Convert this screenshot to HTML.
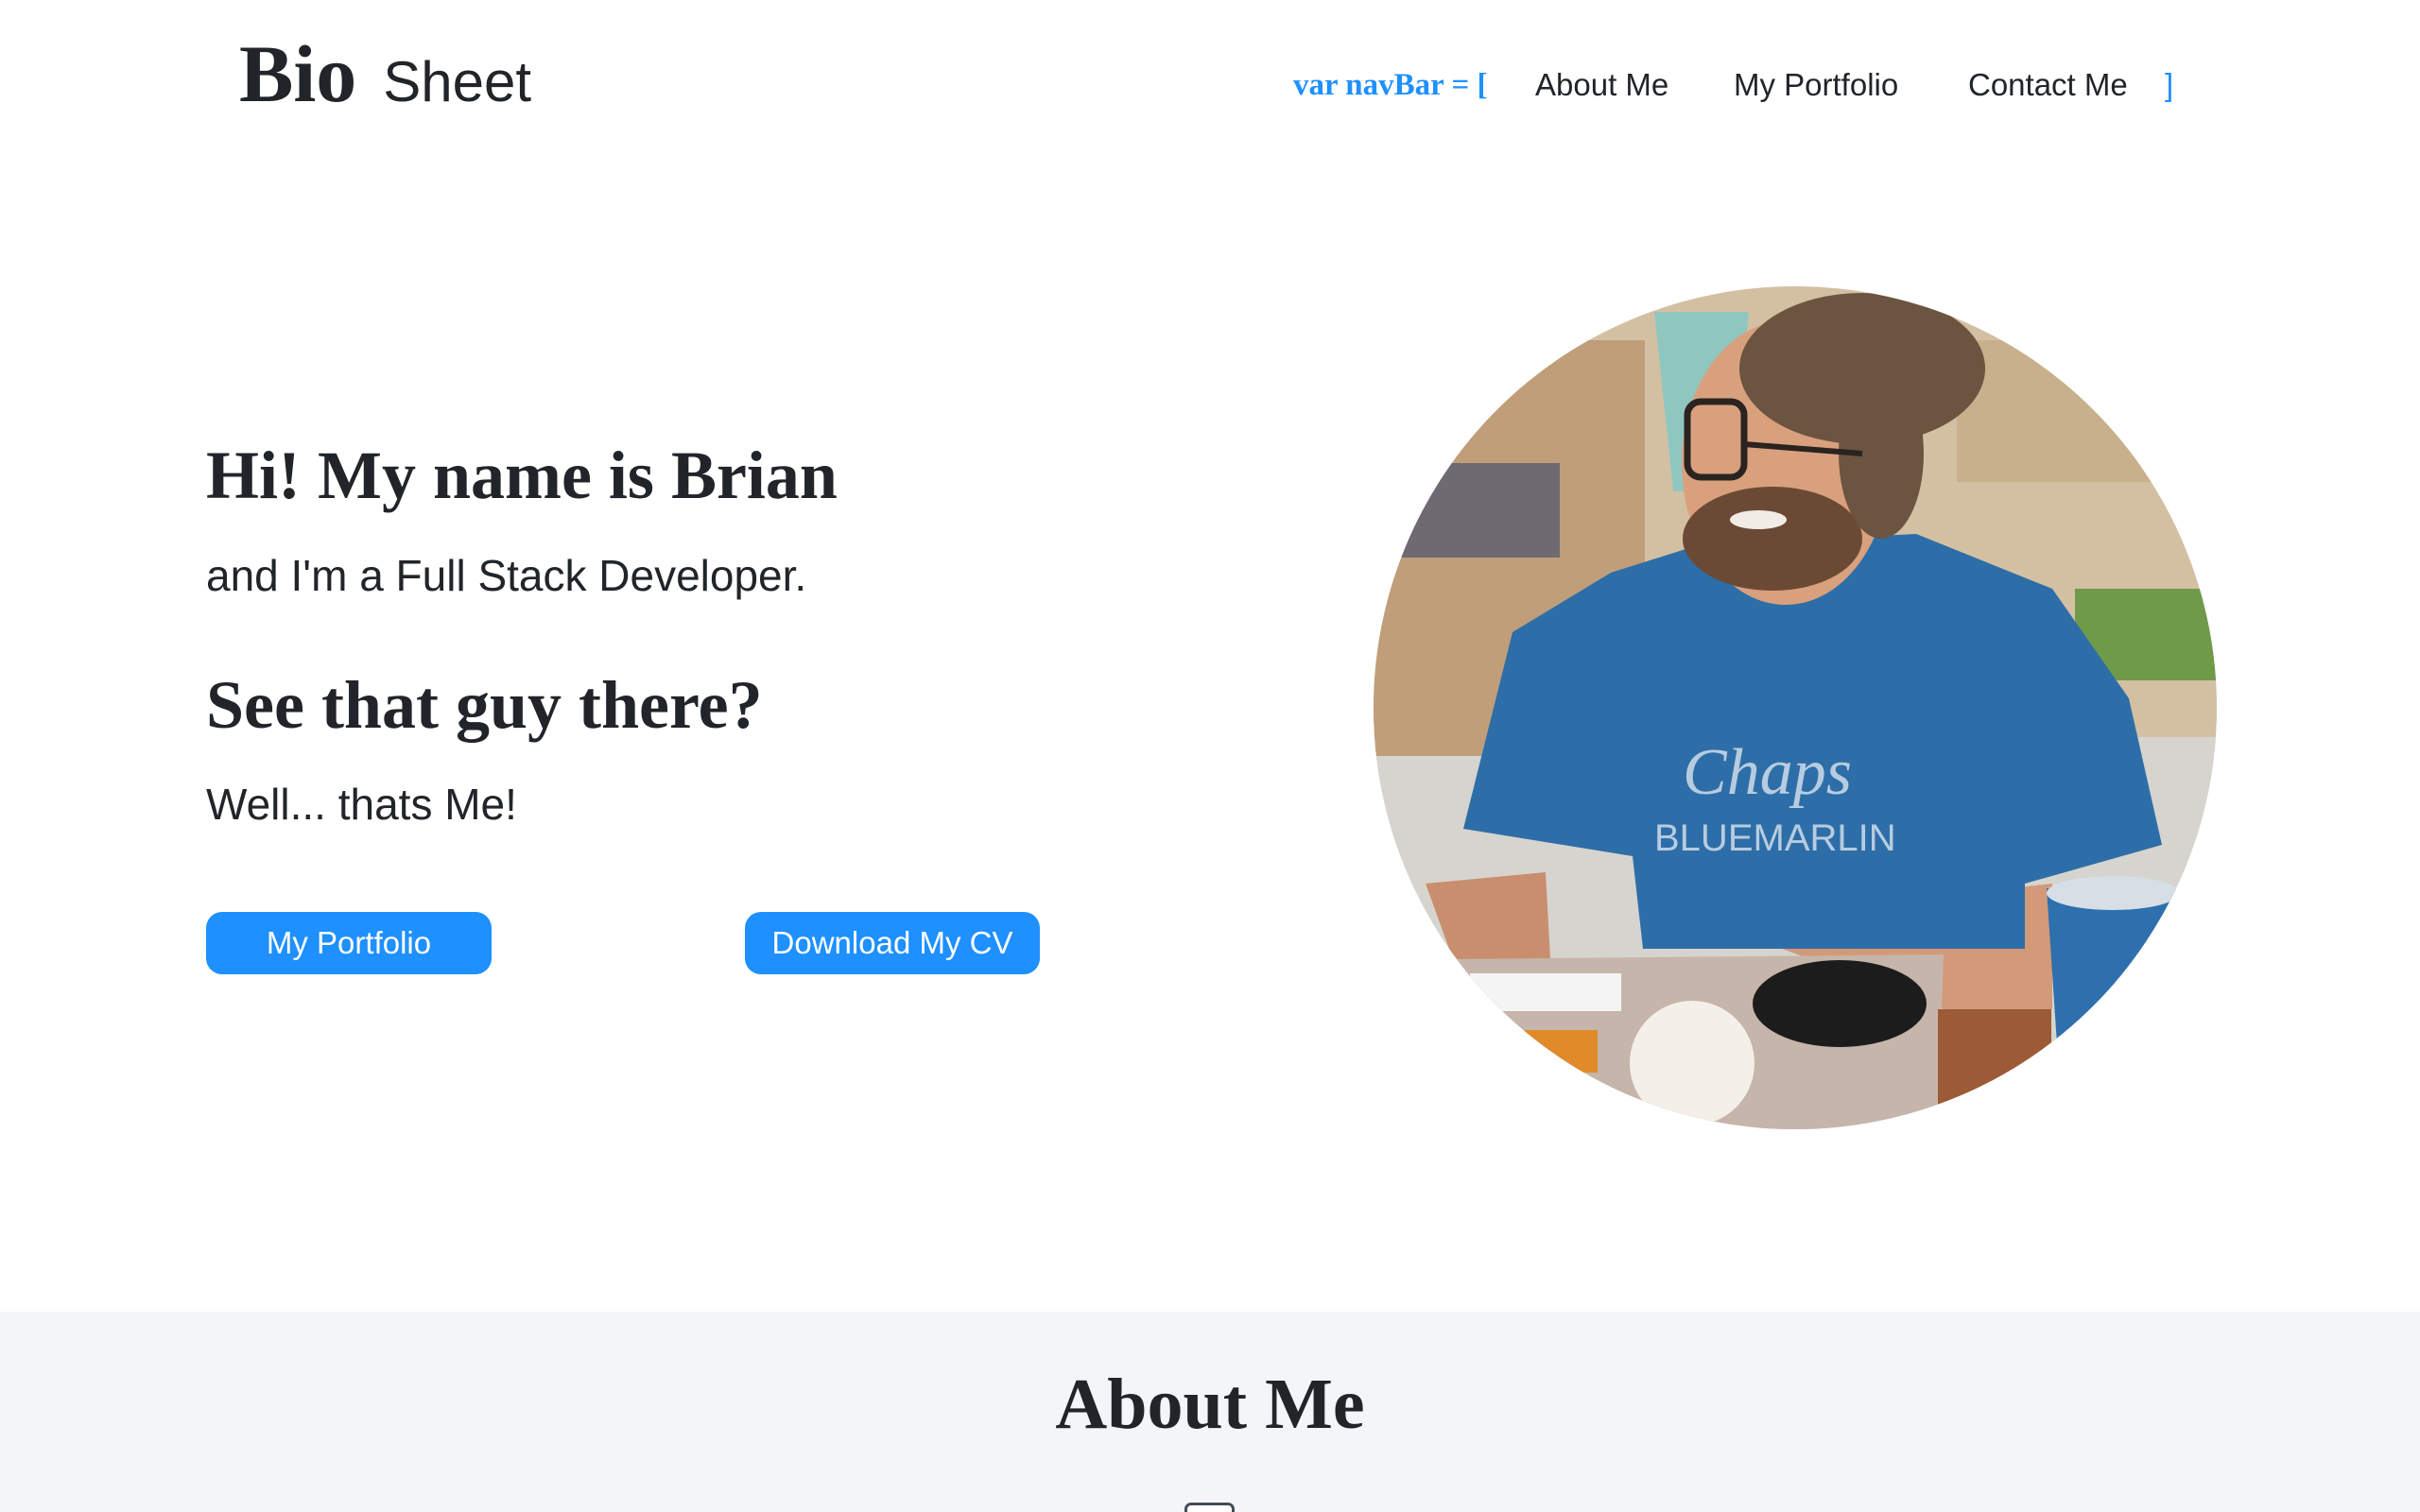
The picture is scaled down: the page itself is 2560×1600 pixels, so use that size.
<!DOCTYPE html>
<html><head><meta charset="utf-8">
<style>
html,body{margin:0;padding:0;width:2560px;height:1600px;overflow:hidden;}
body{background:#fff;position:relative;font-family:"Liberation Sans",sans-serif;color:#212529;}
.abs{position:absolute;white-space:nowrap;}
.logo{left:253px;top:28px;font-family:"Liberation Serif",serif;font-weight:bold;font-size:86px;color:#212529;}
.logo span{font-family:"Liberation Sans",sans-serif;font-weight:normal;font-size:60px;margin-left:28px;}
.nav{top:70px;font-size:33px;line-height:40px;}
.blue{color:#1e90ff;}
.h1{font-family:"Liberation Serif",serif;font-weight:bold;font-size:72px;left:218px;}
.p{font-size:46px;left:218px;}
.btn{background:#1e90ff;color:#fff;border-radius:17px;font-size:33px;text-align:center;line-height:66px;height:66px;top:965px;}
.gray{position:absolute;left:0;top:1388px;width:2560px;height:212px;background:#f4f5f9;}
</style></head><body>
<div class="abs logo">Bio<span>Sheet</span></div>
<div class="abs nav blue" style="left:1368px;font-family:'Liberation Serif',serif;font-weight:bold;">var navBar = [</div>
<div class="abs nav" style="left:1624px;">About Me</div>
<div class="abs nav" style="left:1834px;">My Portfolio</div>
<div class="abs nav" style="left:2082px;">Contact Me</div>
<div class="abs nav blue" style="left:2290px;">]</div>

<div class="abs h1" style="top:462px;">Hi! My name is Brian</div>
<div class="abs p" style="top:582px;">and I'm a Full Stack Developer.</div>
<div class="abs h1" style="top:705px;">See that guy there?</div>
<div class="abs p" style="top:824px;">Well... thats Me!</div>
<div class="abs btn" style="left:218px;width:302px;">My Portfolio</div>
<div class="abs btn" style="left:788px;width:312px;">Download My CV</div>

<svg class="abs" style="left:1450px;top:300px;" width="900" height="900" viewBox="0 0 900 900">
<defs><clipPath id="c"><circle cx="449" cy="449" r="446"/></clipPath></defs>
<g clip-path="url(#c)">
<rect width="900" height="900" fill="#d3c0a3"/>
<rect x="0" y="480" width="900" height="420" fill="#d6d4cf"/>
<polygon points="0,60 290,60 290,500 0,500" fill="#c09e7a"/>
<polygon points="30,190 200,190 200,290 30,290" fill="#6e6a72"/>
<polygon points="620,60 900,60 900,210 620,210" fill="#c8b08c"/>
<polygon points="300,30 400,30 380,220 320,220" fill="#8fc7c0"/>
<polygon points="745,323 900,323 900,420 745,420" fill="#6f9a4a"/>
<polygon points="58,635 185,623 190,715 87,715" fill="#c98e6e"/>
<polygon points="358,675 721,635 721,768 606,768" fill="#d29a78"/>
<polygon points="98,577 150,369 254,306 346,277 577,265 721,323 802,439 837,594 692,635 692,704 288,704 277,606" fill="#2e6ea8"/>
<text x="330" y="540" font-family="Liberation Serif,serif" font-style="italic" font-size="70" fill="#b7cce0">Chaps</text>
<text x="300" y="600" font-family="Liberation Sans,sans-serif" font-size="40" fill="#b7cce0">BLUEMARLIN</text>
<ellipse cx="439" cy="190" rx="110" ry="150" fill="#d9a07e"/>
<ellipse cx="425" cy="270" rx="95" ry="55" fill="#6b4a35"/>
<ellipse cx="410" cy="250" rx="30" ry="10" fill="#f2ece6"/>
<ellipse cx="520" cy="90" rx="130" ry="80" fill="#6b5440"/>
<ellipse cx="540" cy="180" rx="45" ry="90" fill="#6b5440"/>
<rect x="335" y="125" width="60" height="80" rx="14" fill="none" stroke="#2a2320" stroke-width="7"/>
<line x1="395" y1="170" x2="520" y2="180" stroke="#2a2320" stroke-width="6"/>
<polygon points="87,715 606,710 600,900 87,900" fill="#c6b5aa"/>
<ellipse cx="496" cy="762" rx="92" ry="46" fill="#1c1c1c"/>
<circle cx="340" cy="825" r="66" fill="#f4efe9"/>
<rect x="105" y="730" width="160" height="40" fill="#f4f4f4"/>
<rect x="140" y="790" width="100" height="45" fill="#e08a2a"/>
<polygon points="600,768 720,768 720,900 600,900" fill="#9c5a36"/>
<polygon points="715,640 854,640 831,820 727,820" fill="#2e6fae"/>
<ellipse cx="785" cy="645" rx="70" ry="18" fill="#d6dee6"/>
</g></svg>

<div class="gray"></div>
<div class="abs" style="left:0;width:2560px;text-align:center;top:1443px;font-family:'Liberation Serif',serif;font-weight:bold;font-size:76px;">About Me</div>
<div class="abs" style="left:1253px;top:1590px;width:47px;height:30px;border:3px solid #454c55;border-radius:7px;background:#fff;"></div>
</body></html>
